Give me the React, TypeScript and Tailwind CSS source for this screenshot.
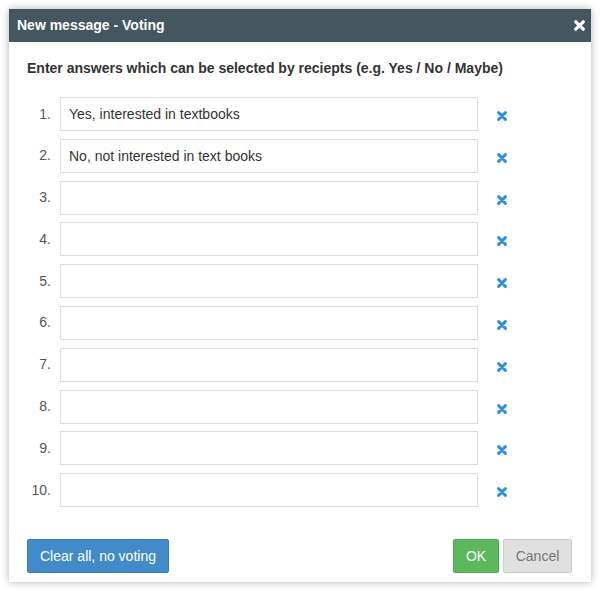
const answers = [
  'Yes, interested in textbooks',
  'No, not interested in text books',
  '',
  '',
  '',
  '',
  '',
  '',
  '',
  '',
];

function Times({ className }: { className?: string }) {
  return (
    <svg viewBox="0 0 10 10" className={className} fill="none">
      <path d="M1.6 1.6 L8.4 8.4 M8.4 1.6 L1.6 8.4" stroke="currentColor" strokeWidth="2.9" strokeLinecap="round" />
    </svg>
  );
}

export default function App() {
  return (
    <div
      className="w-[600px] h-[591px] bg-white p-[9px] text-[14px] text-[#333]"
      style={{ fontFamily: '"Liberation Sans", Arial, sans-serif' }}
    >
      <div className="w-[582px] h-[573px] bg-white flex flex-col shadow-[0_0_8px_rgba(0,0,0,0.3)]">
        {/* Header */}
        <div className="h-[33px] bg-[#44565f] flex items-center justify-between pl-[8px] pr-[6px]">
          <span className="text-white font-bold">New message - Voting</span>
          <Times className="w-[11px] h-[11px] text-white" />
        </div>

        {/* Body */}
        <div className="flex-1 px-[18px] pt-[16px]">
          <p className="font-bold leading-[20px]">
            Enter answers which can be selected by reciepts (e.g. Yes / No / Maybe)
          </p>
          <div className="mt-[19px] flex flex-col gap-[7.8px]">
            {answers.map((answer, i) => (
              <div key={i} className="flex items-center h-[34px]">
                <span className="w-[24px] text-right text-[#555]">{i + 1}.</span>
                <input
                  readOnly
                  value={answer}
                  className="ml-[9px] w-[418px] h-[34px] border border-[#ddd] px-[8px] text-[#333] outline-none"
                />
                <Times className="ml-[19px] mt-[4px] w-[10px] h-[10px] text-[#2a8fe2]" />
              </div>
            ))}
          </div>
        </div>

        {/* Footer */}
        <div className="flex items-center justify-between pl-[18px] pr-[19px] pb-[9px]">
          <button className="h-[34px] px-[12px] bg-[#428bca] border border-[#357ebd] rounded-[2px] text-white">
            Clear all, no voting
          </button>
          <div className="flex gap-[4px]">
            <button className="h-[34px] w-[46px] bg-[#5cb85c] border border-[#4cae4c] rounded-[2px] text-white">
              OK
            </button>
            <button className="h-[34px] w-[69px] bg-[#e0e0e0] border border-[#ccc] rounded-[2px] text-[#777]">
              Cancel
            </button>
          </div>
        </div>
      </div>
    </div>
  );
}
